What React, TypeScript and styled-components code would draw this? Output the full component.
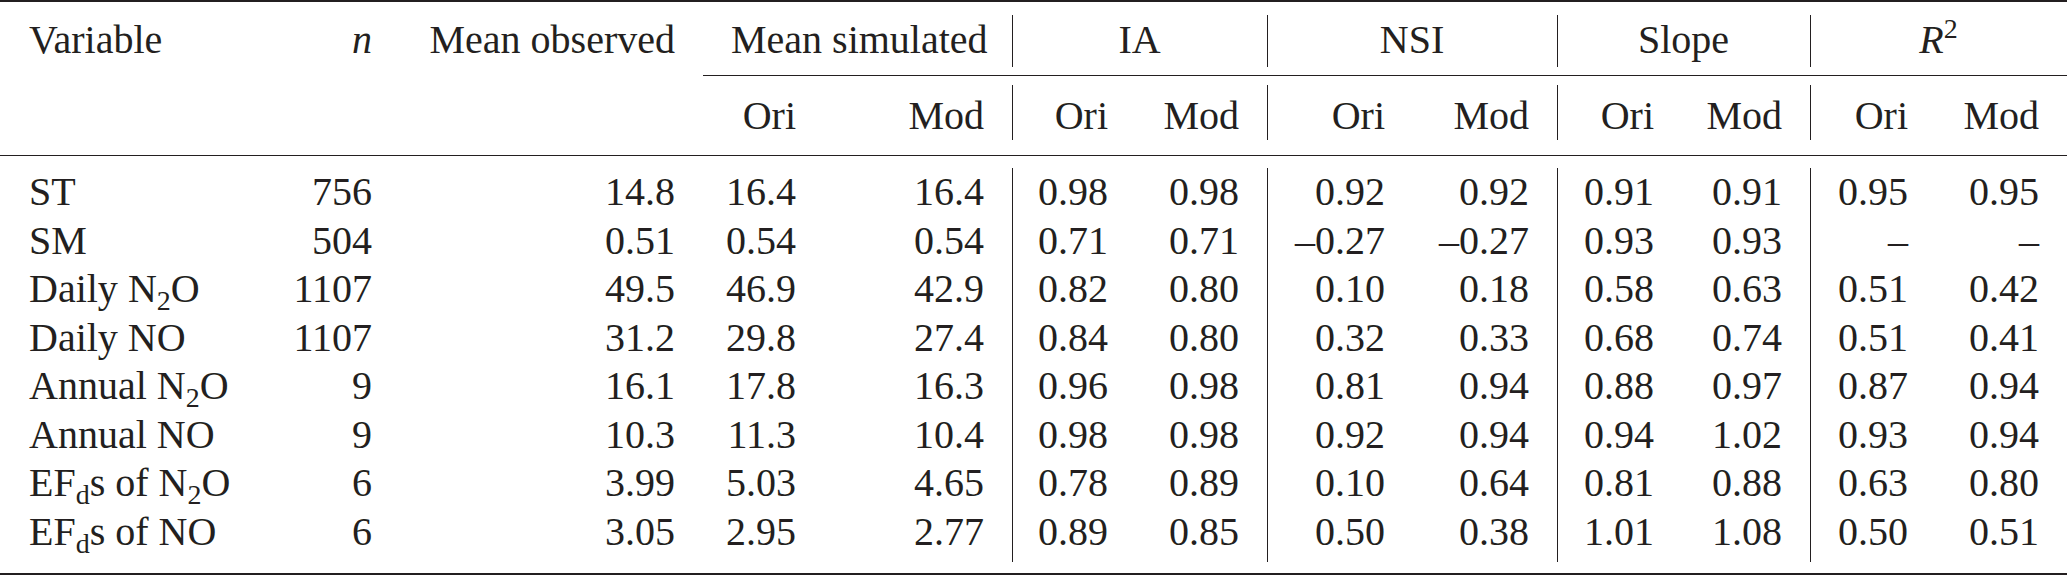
import React from "react";
import styled, { createGlobalStyle } from "styled-components";

const ink = "#231f20";
const serif = `"Liberation Serif", "Times New Roman", Times, serif`;

const GlobalStyle = createGlobalStyle`
  html, body {
    margin: 0;
    padding: 0;
    background: #fff;
  }
  body {
    font-family: ${serif};
    color: ${ink};
  }
`;

const Table = styled.table`
  width: 2067px;
  border-collapse: separate;
  border-spacing: 0;
  table-layout: fixed;
  font-family: ${serif};
  font-size: 40px;
  color: ${ink};
`;

const Col = styled.col<{ $w: number }>`
  width: ${(p) => p.$w}px;
`;

const RuleCell = styled.td<{ $above: number; $below: number }>`
  padding: ${(p) => p.$above}px 0 ${(p) => p.$below}px;
  font-size: 0;
  line-height: 0;
`;

const Line = styled.div<{ $weight: number }>`
  height: ${(p) => p.$weight}px;
  background: ${ink};
`;

const GroupHead = styled.th<{ $align?: string; $rule?: boolean }>`
  padding: 0 28px 2px;
  font-weight: normal;
  line-height: 50px;
  text-align: ${(p) => p.$align ?? "right"};
  white-space: nowrap;
  box-shadow: ${(p) => (p.$rule ? `inset 1px 0 0 ${ink}` : "none")};
  &:first-child {
    padding-left: 29px;
  }
`;

const SubHead = styled.th<{ $rule?: boolean }>`
  padding: 6px 28px 0 12px;
  font-weight: normal;
  line-height: 49px;
  text-align: right;
  white-space: nowrap;
  box-shadow: ${(p) => (p.$rule ? `inset 1px 0 0 ${ink}` : "none")};
`;

const DataRow = styled.tr`
  &:last-child td {
    padding-bottom: 6px;
  }
`;

const Cell = styled.td<{ $align?: string; $rule?: boolean }>`
  padding: 0 28px 0 12px;
  line-height: 48.5px;
  text-align: ${(p) => p.$align ?? "right"};
  white-space: nowrap;
  box-shadow: ${(p) => (p.$rule ? `inset 1px 0 0 ${ink}` : "none")};
  &:first-child {
    padding-left: 29px;
  }
`;

const Sub = styled.sub`
  font-size: 70%;
  line-height: 0;
  vertical-align: -0.3em;
`;

const Sup = styled.sup`
  font-size: 70%;
  line-height: 0;
  vertical-align: 0.55em;
`;

const Ital = styled.i`
  font-style: italic;
`;

const widths = [266, 134, 303, 121, 188, 124, 131, 146, 144, 125, 128, 126, 131];

// columns that carry a vertical rule on their left edge
const ruled = new Set([5, 7, 9, 11]);

type Row = { label: React.ReactNode; values: string[] };

const N2O = (
  <>
    N<Sub>2</Sub>O
  </>
);

const rows: Row[] = [
  { label: "ST", values: ["756", "14.8", "16.4", "16.4", "0.98", "0.98", "0.92", "0.92", "0.91", "0.91", "0.95", "0.95"] },
  { label: "SM", values: ["504", "0.51", "0.54", "0.54", "0.71", "0.71", "–0.27", "–0.27", "0.93", "0.93", "–", "–"] },
  { label: <>Daily {N2O}</>, values: ["1107", "49.5", "46.9", "42.9", "0.82", "0.80", "0.10", "0.18", "0.58", "0.63", "0.51", "0.42"] },
  { label: "Daily NO", values: ["1107", "31.2", "29.8", "27.4", "0.84", "0.80", "0.32", "0.33", "0.68", "0.74", "0.51", "0.41"] },
  { label: <>Annual {N2O}</>, values: ["9", "16.1", "17.8", "16.3", "0.96", "0.98", "0.81", "0.94", "0.88", "0.97", "0.87", "0.94"] },
  { label: "Annual NO", values: ["9", "10.3", "11.3", "10.4", "0.98", "0.98", "0.92", "0.94", "0.94", "1.02", "0.93", "0.94"] },
  { label: <>EF<Sub>d</Sub>s of {N2O}</>, values: ["6", "3.99", "5.03", "4.65", "0.78", "0.89", "0.10", "0.64", "0.81", "0.88", "0.63", "0.80"] },
  { label: <>EF<Sub>d</Sub>s of NO</>, values: ["6", "3.05", "2.95", "2.77", "0.89", "0.85", "0.50", "0.38", "1.01", "1.08", "0.50", "0.51"] },
];

const groups: { title: React.ReactNode; rule: boolean }[] = [
  { title: "Mean simulated", rule: false },
  { title: "IA", rule: true },
  { title: "NSI", rule: true },
  { title: "Slope", rule: true },
  {
    title: (
      <>
        <Ital>R</Ital>
        <Sup>2</Sup>
      </>
    ),
    rule: true,
  },
];

const App = () => {
  return (
    <>
      <GlobalStyle />
      <Table>
        <colgroup>
          {widths.map((w, i) => (
            <Col key={i} $w={w} />
          ))}
        </colgroup>
        <thead>
          <tr>
            <RuleCell colSpan={13} $above={0} $below={13}>
              <Line $weight={2} />
            </RuleCell>
          </tr>
          <tr>
            <GroupHead $align="left">Variable</GroupHead>
            <GroupHead>
              <Ital>n</Ital>
            </GroupHead>
            <GroupHead>Mean observed</GroupHead>
            {groups.map((g, i) => (
              <GroupHead key={i} colSpan={2} $align="center" $rule={g.rule}>
                {g.title}
              </GroupHead>
            ))}
          </tr>
          <tr>
            <RuleCell colSpan={3} $above={8} $below={9} />
            <RuleCell colSpan={10} $above={8} $below={9}>
              <Line $weight={1} />
            </RuleCell>
          </tr>
          <tr>
            <SubHead />
            <SubHead />
            <SubHead />
            {groups.map((g, i) => (
              <React.Fragment key={i}>
                <SubHead $rule={g.rule}>Ori</SubHead>
                <SubHead>Mod</SubHead>
              </React.Fragment>
            ))}
          </tr>
          <tr>
            <RuleCell colSpan={13} $above={15} $below={12}>
              <Line $weight={1} />
            </RuleCell>
          </tr>
        </thead>
        <tbody>
          {rows.map((r, i) => (
            <DataRow key={i}>
              <Cell $align="left">{r.label}</Cell>
              {r.values.map((v, j) => (
                <Cell key={j} $rule={ruled.has(j + 1)}>
                  {v}
                </Cell>
              ))}
            </DataRow>
          ))}
        </tbody>
        <tfoot>
          <tr>
            <RuleCell colSpan={13} $above={11} $below={2}>
              <Line $weight={2} />
            </RuleCell>
          </tr>
        </tfoot>
      </Table>
    </>
  );
};

export default App;
